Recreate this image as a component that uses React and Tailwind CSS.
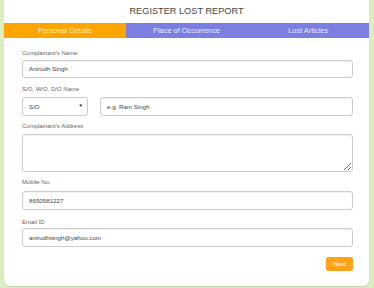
import React from 'react';

const font = { fontFamily: '"Liberation Sans", Arial, sans-serif' };

const Label = ({ children, className = '' }) => (
  <div className={`h-[8px] leading-[8px] text-[6px] text-[#666] ${className}`}>{children}</div>
);

const Field = ({ value, className = '' }) => (
  <div
    className={`flex items-center px-[6px] border border-[#ccc] rounded-[3px] bg-white text-[6.2px] text-[#444] shadow-[inset_0_1px_1px_rgba(0,0,0,0.06)] ${className}`}
  >
    {value}
  </div>
);

export default function App() {
  return (
    <div className="w-[374px] h-[288px] bg-[#dcedc1] overflow-hidden" style={font}>
      <div className="ml-[4px] w-[365px] h-[286px] bg-white rounded-b-[6px] shadow-[0_1px_1px_rgba(0,0,0,0.12)] flex flex-col">
        <div className="h-[23px] flex items-center justify-center text-[9.2px] text-[#444]">
          REGISTER LOST REPORT
        </div>
        <div className="h-[15px] grid grid-cols-3 text-[7.4px]">
          <div className="bg-[#ffa500] text-[#ffedc8] flex items-center justify-center">Personal Details</div>
          <div className="bg-[#7b7fe1] text-[#ececff] flex items-center justify-center">Place of Occurrence</div>
          <div className="bg-[#7b7fe1] text-[#ececff] flex items-center justify-center">Lost Articles</div>
        </div>

        <div className="pl-[18px] pr-[16px] pt-[11px] flex flex-col">
          <Label>Complainant&apos;s Name</Label>
          <Field value="Anirudh Singh" className="mt-[3px] h-[18px]" />

          <Label className="mt-[7px]">S/O, W/O, D/O Name</Label>
          <div className="mt-[4px] flex gap-[12px]">
            <div className="w-[66px] h-[19px] flex items-center justify-between pl-[6px] pr-[4px] border border-[#ccc] rounded-[3px] text-[6.2px] text-[#444]">
              <span>S/O</span>
              <span className="text-[4.5px] text-[#222]">▼</span>
            </div>
            <Field value="e.g. Ram Singh" className="flex-1 h-[19px]" />
          </div>

          <Label className="mt-[6px]">Complainant&apos;s Address</Label>
          <textarea
            readOnly
            className="mt-[4px] h-[38px] border border-[#ccc] rounded-[3px] resize outline-none shadow-[inset_0_1px_1px_rgba(0,0,0,0.06)]"
          />

          <Label className="mt-[6px]">Mobile No.</Label>
          <Field value="8650581227" className="mt-[5px] h-[19px]" />

          <Label className="mt-[8px]">Email ID</Label>
          <Field value="anirudhsingh@yahoo.com" className="mt-[2px] h-[19px]" />

          <div className="mt-[10px] flex justify-end">
            <button className="w-[27px] h-[14px] bg-[#ffa31a] rounded-[2px] text-white text-[6px] flex items-center justify-center">
              Next
            </button>
          </div>
        </div>
      </div>
    </div>
  );
}
